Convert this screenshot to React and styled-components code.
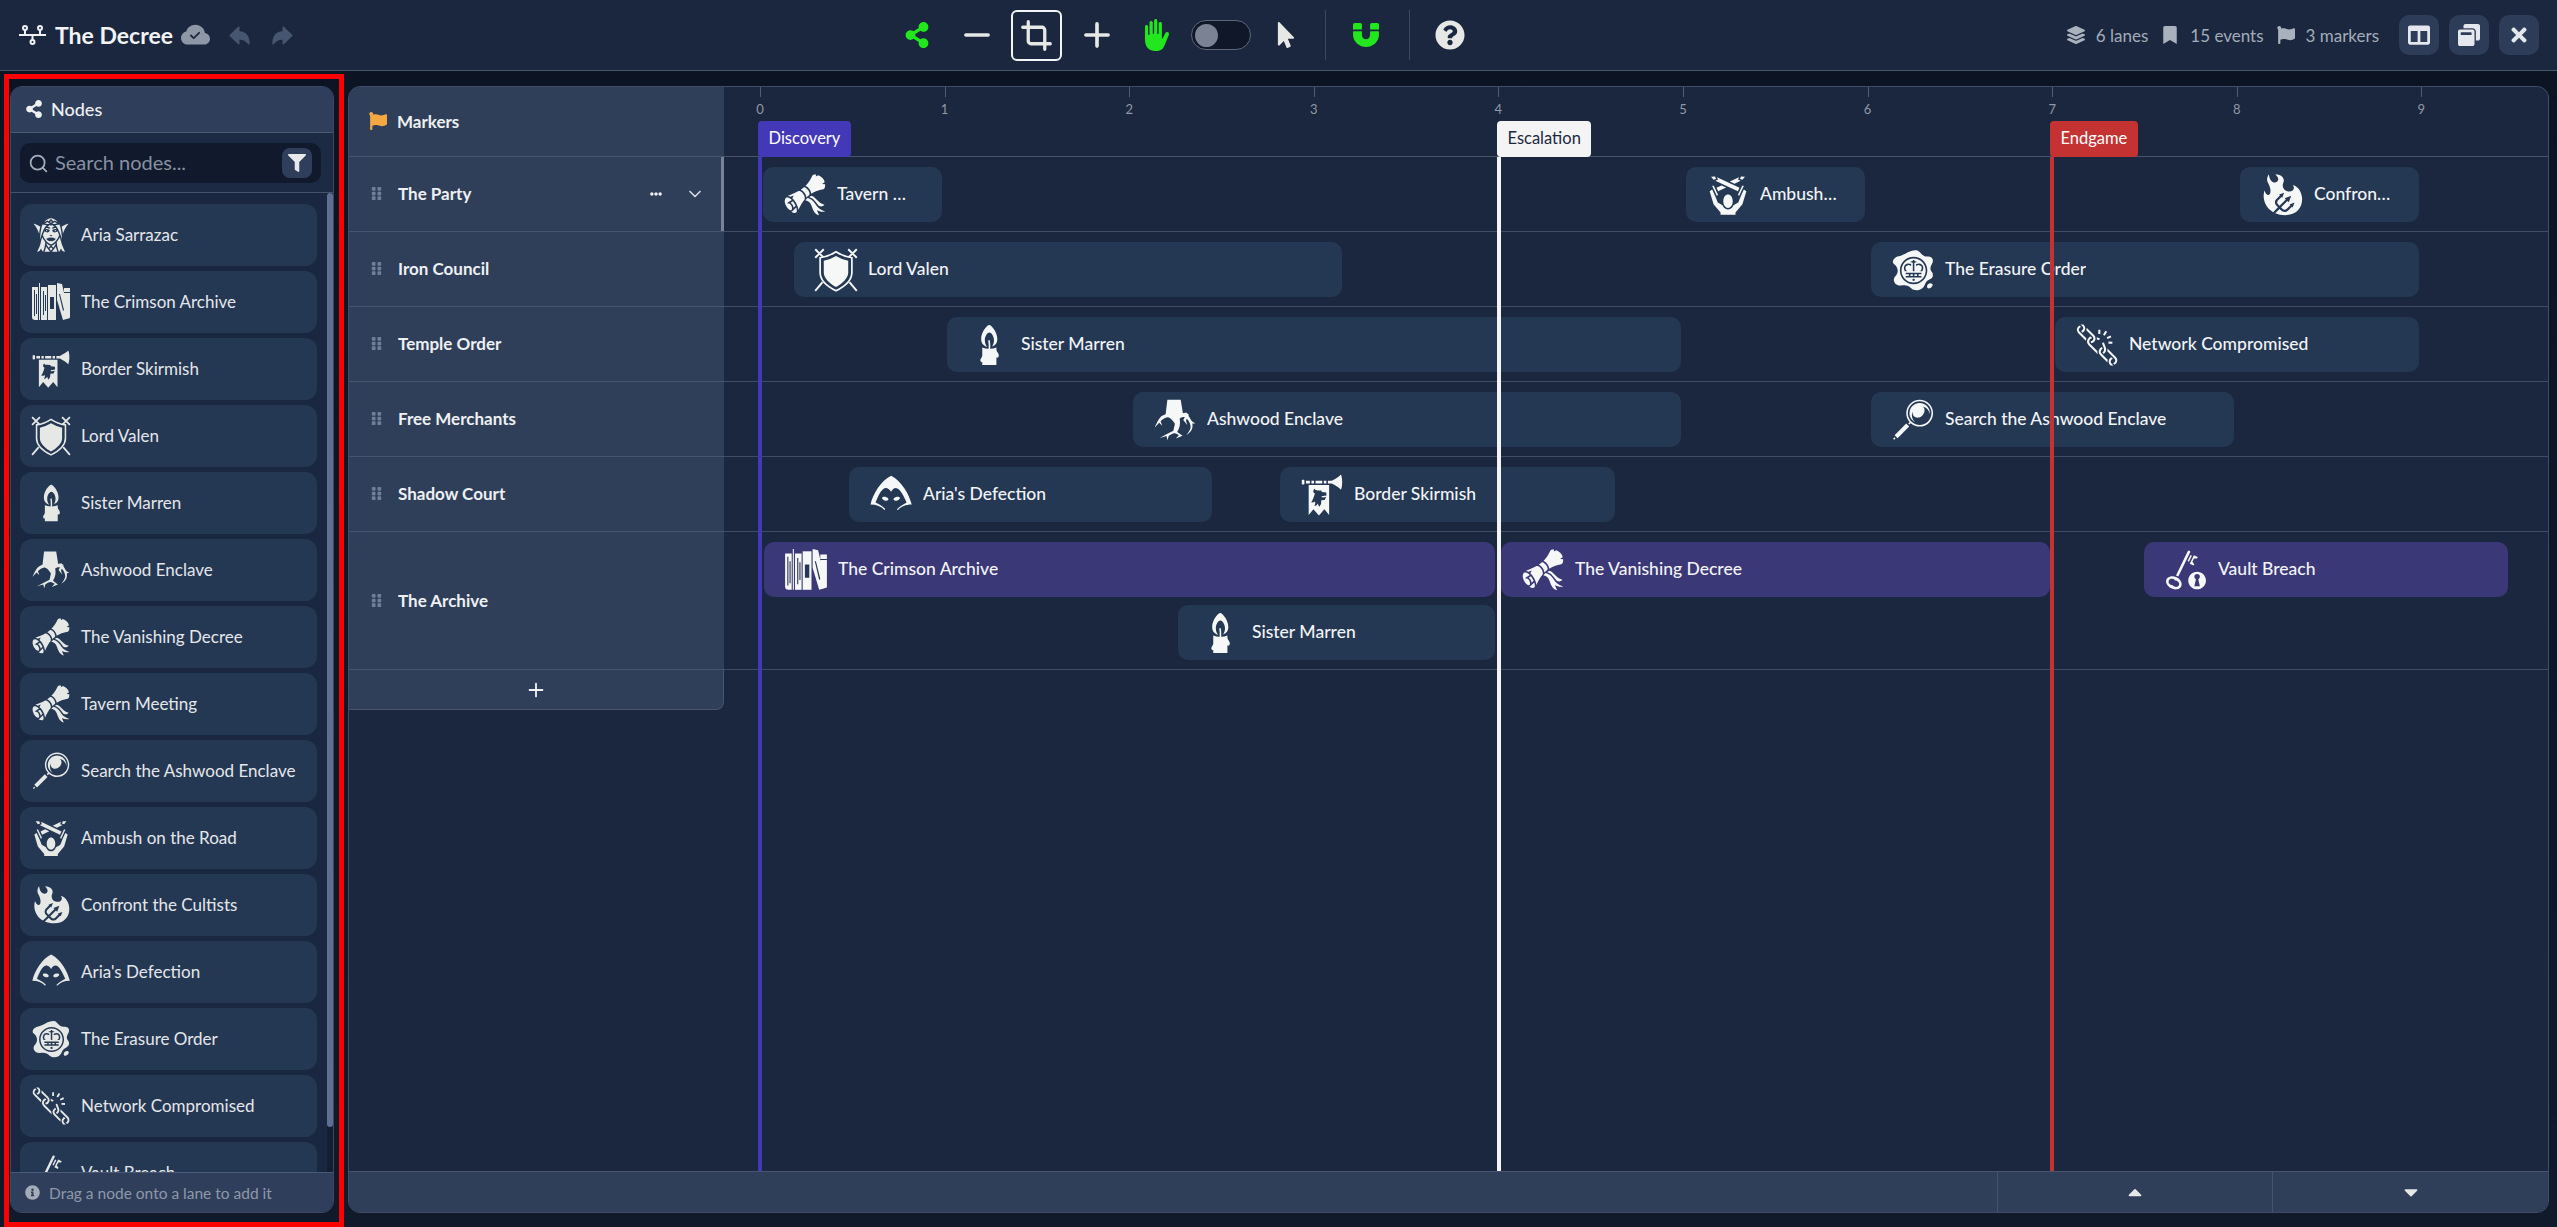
import React from "react";
import styled, { createGlobalStyle } from "styled-components";
import {
  GiWomanElfFace, GiTrumpetFlag, GiCandleLight, GiTreeRoots, GiTiedScroll, GiMagnifyingGlass,
  GiSwordsPower, GiFlamingTrident, GiHood, GiWaxSeal, GiBreakingChain, GiKeyLock,
} from "react-icons/gi";
import {
  FaShareAlt, FaMousePointer, FaMagnet, FaLayerGroup, FaBookmark, FaFlag, FaWindowRestore,
  FaTimes, FaGripVertical, FaEllipsisH, FaInfoCircle, FaFilter, FaCaretUp, FaCaretDown,
  FaQuestionCircle, FaColumns,
} from "react-icons/fa";
import { IoArrowUndo, IoArrowRedo, IoHandLeft } from "react-icons/io5";
import { BsCloudCheckFill } from "react-icons/bs";
import { LuSearch, LuChevronDown, LuPlus, LuMinus, LuCrop } from "react-icons/lu";

const GlobalStyle = createGlobalStyle`
  html, body { margin: 0; padding: 0; height: 100%; background: #0d1524; }
  body { font-family: "Lato", "Liberation Sans", sans-serif; overflow: hidden; }
  * { box-sizing: border-box; }
`;

const Page = styled.div`
  position: relative;
  display: flex;
  flex-direction: column;
  height: 1227px;
  background: linear-gradient(#0c1423, #101a2b);
`;

const Header = styled.header`
  display: flex;
  align-items: center;
  flex-shrink: 0;
  height: 71px;
  padding: 0 18px 0 19px;
  background: #1b273e;
  border-bottom: 1px solid #4a566c;
`;

const Brand = styled.div`
  display: flex;
  align-items: center;
  width: 872px;
  color: #eef0f2;
`;

const Title = styled.h1`
  margin: 0 8px 0 9px;
  font-size: 23px;
  font-weight: 700;
  color: #f1f3f5;
`;

const HistoryIcon = styled.span`
  display: flex;
  margin-left: ${(p) => p.$gap}px;
  font-size: 25px;
  color: #465671;
`;

const Toolbar = styled.div`
  display: flex;
  align-items: center;
  gap: 9px;
`;

const ToolButton = styled.button`
  display: flex;
  align-items: center;
  justify-content: center;
  width: 51px;
  height: 51px;
  padding: 0;
  background: none;
  border: 2px solid ${(p) => (p.$framed ? "#f2f4f5" : "transparent")};
  border-radius: 6px;
  font-size: ${(p) => p.$size || 26}px;
  color: ${(p) => (p.$green ? "#22e61e" : "#e6e8e6")};
`;

const Toggle = styled.div`
  display: flex;
  align-items: center;
  width: 60px;
  height: 30px;
  padding: 0 3px;
  background: #0f1728;
  border: 1px solid #5d6779;
  border-radius: 15px;
`;

const Knob = styled.span`
  width: 23px;
  height: 23px;
  border-radius: 50%;
  background: #7b8293;
`;

const ToolDivider = styled.span`
  width: 1px;
  height: 50px;
  margin: 0 5px 0 ${(p) => p.$before || 5}px;
  background: #3c485e;
`;

const Stats = styled.div`
  display: flex;
  align-items: center;
  margin-left: auto;
  color: #a3acba;
  font-size: 17px;
`;

const Stat = styled.span`
  display: flex;
  align-items: center;
  gap: 11px;
  margin-right: 13px;
  &:last-of-type { margin-right: 20px; }
  svg { font-size: 18px; color: #a9b1bd; }
`;

const WindowButton = styled.button`
  display: flex;
  align-items: center;
  justify-content: center;
  width: 40px;
  height: 40px;
  margin-left: ${(p) => p.$gap || 0}px;
  padding: 0;
  background: #2d3c58;
  border: none;
  border-radius: 10px;
  font-size: 22px;
  color: #e4e8ee;
`;

const Workspace = styled.main`
  display: flex;
  flex: 1;
  min-height: 0;
  gap: 14px;
  padding: 15px 8px 14px 10px;
`;

const NodesPanel = styled.aside`
  display: flex;
  flex-direction: column;
  flex-shrink: 0;
  width: 324px;
  overflow: hidden;
  background: #1a2740;
  border: 1px solid #3a4862;
  border-radius: 12px;
`;

const NodesHead = styled.div`
  display: flex;
  align-items: center;
  gap: 8px;
  flex-shrink: 0;
  height: 46px;
  padding: 0 0 2px 14px;
  background: #2f3f5b;
  border-bottom: 1px solid #4a5a76;
  color: #eef0f2;
  font-size: 18px;
  font-weight: 500;
`;

const SearchRow = styled.div`
  flex-shrink: 0;
  height: 60px;
  padding: 10px 12px 0 9px;
  background: #1c2a43;
  border-bottom: 1px solid #46536c;
`;

const SearchBox = styled.div`
  display: flex;
  align-items: center;
  height: 40px;
  padding: 0 9px 0 8px;
  background: #101a2c;
  border-radius: 10px;
  color: #8791a2;
  font-size: 20px;
  svg.lens { font-size: 21px; margin-right: 6px; color: #a6aeba; }
`;

const SearchHint = styled.span`
  padding-bottom: 2px;
`;

const FilterButton = styled.span`
  display: flex;
  align-items: center;
  justify-content: center;
  width: 30px;
  height: 30px;
  margin-left: auto;
  background: #2f3f5b;
  border-radius: 8px;
  font-size: 18px;
  color: #e6e8ea;
`;

const ListArea = styled.div`
  position: relative;
  flex: 1;
  min-height: 0;
`;

const NodeList = styled.div`
  display: flex;
  flex-direction: column;
  height: 100%;
  gap: 5px;
  padding: 11px 16px 17px 9px;
  overflow: hidden;
`;

// the page's own scrollbar, drawn because the browser hides native ones when photographed
const ScrollTrack = styled.div`
  position: absolute;
  top: 0;
  right: 0;
  bottom: 0;
  width: 6px;
  background: #141e31;
`;

const ScrollThumb = styled.div`
  height: 934px;
  background: #5f6f92;
  border-radius: 3px;
`;

const NodeCard = styled.div`
  display: flex;
  align-items: center;
  flex-shrink: 0;
  height: 62px;
  padding-left: 11px;
  background: #243854;
  border-radius: 12px;
  color: #e4e7ea;
  font-size: 17px;
  svg { flex-shrink: 0; font-size: 40px; margin-right: 10px; color: #e6e8e6; }
`;

const NodeName = styled.span`
  padding-bottom: 2px;
`;

const NodesFoot = styled.div`
  display: flex;
  align-items: center;
  gap: 9px;
  flex-shrink: 0;
  height: 40px;
  padding-left: 14px;
  background: #2f3f5b;
  border-top: 1px solid #4a5a76;
  color: #8e98a8;
  font-size: 15.5px;
  svg { font-size: 15px; color: #a4acb8; }
`;

const BoardPanel = styled.section`
  display: flex;
  flex-direction: column;
  flex: 1;
  min-width: 0;
  overflow: hidden;
  background: #1b273e;
  border: 1px solid #3f4d68;
  border-radius: 12px;
`;

const BoardBody = styled.div`
  display: flex;
  flex: 1;
  min-height: 0;
`;

const LaneColumn = styled.div`
  flex-shrink: 0;
  width: 375px;
`;

const LaneHead = styled.div`
  position: relative;
  display: flex;
  align-items: center;
  height: ${(p) => p.$height}px;
  padding: 0 0 1px 20px;
  background: #2f3f5a;
  border-bottom: 1px solid #46546e;
  color: #eef0f2;
  font-size: 17px;
  font-weight: 700;
`;

const MarkerIcon = styled(FaFlag)`
  margin-right: 10px;
  font-size: 18px;
  color: #f5a742;
`;

const Grip = styled(FaGripVertical)`
  margin-right: 14px;
  font-size: 15px;
  color: #6f7f99;
`;

const LaneActions = styled.span`
  display: flex;
  align-items: center;
  gap: 23px;
  margin-left: auto;
  padding-right: 19px;
  font-size: 12px;
  svg.chevron { font-size: 20px; color: #d5d9df; }
`;

const ActiveEdge = styled.span`
  position: absolute;
  top: 0;
  right: 0;
  bottom: 0;
  width: 3px;
  background: #76839a;
`;

const AddLane = styled.div`
  display: flex;
  align-items: center;
  justify-content: center;
  height: 40px;
  background: #2f3f5a;
  border-bottom: 1px solid #46546e;
  border-right: 1px solid #46546e;
  border-bottom-right-radius: 8px;
  font-size: 22px;
  color: #f0f2f4;
`;

const Timeline = styled.div`
  position: relative;
  flex: 1;
  min-width: 0;
`;

const Ruler = styled.div`
  position: relative;
  height: 70px;
  border-bottom: 1px solid #46546e;
`;

const Tick = styled.span`
  position: absolute;
  top: 0;
  left: ${(p) => p.$left}px;
  width: 1px;
  height: 10px;
  background: #4f5c75;
`;

const TickLabel = styled.span`
  position: absolute;
  top: 14px;
  left: ${(p) => p.$left - 10}px;
  width: 20px;
  text-align: center;
  color: #8f98a8;
  font-size: 13px;
`;

const Track = styled.div`
  position: relative;
  height: ${(p) => p.$height}px;
  border-bottom: 1px solid #3f4c66;
`;

const EventBlock = styled.div`
  position: absolute;
  top: ${(p) => p.$top}px;
  left: ${(p) => p.$left}px;
  display: flex;
  align-items: center;
  width: ${(p) => p.$width}px;
  height: 55px;
  padding: 0 25px 0 20px;
  background: ${(p) => (p.$purple ? "#3b3878" : "#243854")};
  border-radius: 10px;
  color: #f2f4f6;
  font-size: 17.5px;
  font-weight: 500;
  svg { flex-shrink: 0; font-size: 44px; margin-right: 10px; color: #f6f7f7; }
`;

const EventName = styled.span`
  padding-bottom: 2px;
  overflow: hidden;
  white-space: nowrap;
  text-overflow: ellipsis;
`;

const MarkerLine = styled.span`
  position: absolute;
  top: 70px;
  bottom: 0;
  left: ${(p) => p.$left}px;
  width: 4px;
  background: ${(p) => p.$color};
  z-index: 2;
`;

const MarkerFlag = styled.span`
  position: absolute;
  top: 34px;
  left: ${(p) => p.$left}px;
  display: flex;
  align-items: center;
  height: 36px;
  padding: 0 10.5px 2px;
  background: ${(p) => p.$color};
  border-radius: 4px;
  color: ${(p) => p.$text};
  font-size: 16.5px;
  z-index: 2;
`;

const BoardFoot = styled.div`
  display: flex;
  flex-shrink: 0;
  height: 41px;
  background: #2f3f5a;
  border-top: 1px solid #46546e;
`;

const FootSpacer = styled.div`
  flex: 1;
`;

const FootButton = styled.div`
  display: flex;
  align-items: center;
  justify-content: center;
  width: ${(p) => p.$width}px;
  border-left: 1px solid #46546e;
  font-size: 22px;
  color: #e6e8e6;
`;

const Annotation = styled.div`
  position: absolute;
  top: 74px;
  left: 4px;
  width: 340px;
  height: 1153px;
  border: 5px solid #ff0000;
  pointer-events: none;
  z-index: 5;
`;

// the little branching glyph next to the project title
const BranchIcon = () => (
  <svg width="27" height="20" viewBox="0 0 27 20" fill="none" stroke="currentColor" strokeWidth="2">
    <circle cx="6" cy="3" r="2" />
    <circle cx="21" cy="3" r="2" />
    <circle cx="13.5" cy="17" r="2" />
    <path d="M0 10h27M6 5v5M21 5v5M13.5 10v5" />
  </svg>
);

// closer to the reference than the packaged bookshelf: books stand tight together
const ArchiveIcon = () => (
  <svg width="1em" height="1em" viewBox="0 0 40 40" fill="currentColor">
    <path d="M1 5h6v33H4c-2 0-3-1-3-3z" />
    <path d="M8 1h1v37H8z" />
    <path d="M10 5h6v33h-6z" />
    <path d="M17 3h8v35h-8z" />
    <path d="M26 1l5 1 8 34-7 2-6-20z" />
    <path d="M33 6h6v29l-4 2-2-8z" />
    <g fill="#243854">
      <path d="M3 8h1v26H3zM5 12h1v20H5zM12 9h1v24h-1zM14 13h1v16h-1zM19 15h4v12h-4z" />
      <path d="M28 12l1 0 4 16-1 1zM33 10h6v1h-6z" />
    </g>
  </svg>
);

const CrestIcon = () => (
  <svg width="1em" height="1em" viewBox="0 0 36 36" fill="currentColor">
    <path d="M1 1l7 7M8 1L1 8M35 1l-7 7M28 1l7 7M1 35l6-7M35 35l-6-7" stroke="currentColor" strokeWidth="1.6" />
    <path d="M18 3Q12 7 5 8V20C5 27 12 32 18 35 24 32 31 27 31 20V8Q24 7 18 3Z" fill="#243854" stroke="currentColor" strokeWidth="1.4" />
    <path d="M18 6.5Q13 9.500 8 10.500V20C8 25 13 29 18 32 23 29 28 25 28 20V10.500Q23 9.500 18 6.500Z" />
  </svg>
);

const nodes = [
  [GiWomanElfFace, "Aria Sarrazac"],
  [ArchiveIcon, "The Crimson Archive"],
  [GiTrumpetFlag, "Border Skirmish"],
  [CrestIcon, "Lord Valen"],
  [GiCandleLight, "Sister Marren"],
  [GiTreeRoots, "Ashwood Enclave"],
  [GiTiedScroll, "The Vanishing Decree"],
  [GiTiedScroll, "Tavern Meeting"],
  [GiMagnifyingGlass, "Search the Ashwood Enclave"],
  [GiSwordsPower, "Ambush on the Road"],
  [GiFlamingTrident, "Confront the Cultists"],
  [GiHood, "Aria's Defection"],
  [GiWaxSeal, "The Erasure Order"],
  [GiBreakingChain, "Network Compromised"],
  [GiKeyLock, "Vault Breach"],
];

// left / width are pixels along the timeline, top is inside the lane
const lanes = [
  {
    name: "The Party", height: 75, active: true,
    events: [
      { icon: GiTiedScroll, name: "Tavern Meeting", left: 39, width: 179, top: 10 },
      { icon: GiSwordsPower, name: "Ambush on the Road", left: 962, width: 179, top: 10 },
      { icon: GiFlamingTrident, name: "Confront the Cultists", left: 1516, width: 179, top: 10 },
    ],
  },
  {
    name: "Iron Council", height: 75,
    events: [
      { icon: CrestIcon, name: "Lord Valen", left: 70, width: 548, top: 10 },
      { icon: GiWaxSeal, name: "The Erasure Order", left: 1147, width: 548, top: 10 },
    ],
  },
  {
    name: "Temple Order", height: 75,
    events: [
      { icon: GiCandleLight, name: "Sister Marren", left: 223, width: 734, top: 10 },
      { icon: GiBreakingChain, name: "Network Compromised", left: 1331, width: 364, top: 10 },
    ],
  },
  {
    name: "Free Merchants", height: 75,
    events: [
      { icon: GiTreeRoots, name: "Ashwood Enclave", left: 409, width: 548, top: 10 },
      { icon: GiMagnifyingGlass, name: "Search the Ashwood Enclave", left: 1147, width: 363, top: 10 },
    ],
  },
  {
    name: "Shadow Court", height: 75,
    events: [
      { icon: GiHood, name: "Aria's Defection", left: 125, width: 363, top: 10 },
      { icon: GiTrumpetFlag, name: "Border Skirmish", left: 556, width: 335, top: 10 },
    ],
  },
  {
    name: "The Archive", height: 138,
    events: [
      { icon: ArchiveIcon, name: "The Crimson Archive", left: 40, width: 731, top: 10, purple: true },
      { icon: GiTiedScroll, name: "The Vanishing Decree", left: 777, width: 549, top: 10, purple: true },
      { icon: GiKeyLock, name: "Vault Breach", left: 1420, width: 364, top: 10, purple: true },
      { icon: GiCandleLight, name: "Sister Marren", left: 454, width: 317, top: 73 },
    ],
  },
];

const markers = [
  { name: "Discovery", left: 34, color: "#4338b8", text: "#fff" },
  { name: "Escalation", left: 773, color: "#f4f4f4", text: "#1c2840" },
  { name: "Endgame", left: 1326, color: "#c53232", text: "#fff" },
];

const ticks = [0, 1, 2, 3, 4, 5, 6, 7, 8, 9];

export default function App() {
  return (
    <Page>
      <GlobalStyle />
      <Header>
        <Brand>
          <BranchIcon />
          <Title>The Decree</Title>
          <BsCloudCheckFill size={29} color="#8d97a6" />
          <HistoryIcon $gap={17}><IoArrowUndo /></HistoryIcon>
          <HistoryIcon $gap={18}><IoArrowRedo /></HistoryIcon>
        </Brand>
        <Toolbar>
          <ToolButton $green><FaShareAlt /></ToolButton>
          <ToolButton $size={38}><LuMinus strokeWidth={2.3} /></ToolButton>
          <ToolButton $framed $size={33}><LuCrop strokeWidth={2.4} /></ToolButton>
          <ToolButton $size={38}><LuPlus strokeWidth={2.3} /></ToolButton>
          <ToolButton $green $size={32}><IoHandLeft /></ToolButton>
          <Toggle><Knob /></Toggle>
          <ToolButton><FaMousePointer /></ToolButton>
          <ToolDivider />
          <ToolButton $green><FaMagnet /></ToolButton>
          <ToolDivider $before={9} />
          <ToolButton $size={30}><FaQuestionCircle /></ToolButton>
        </Toolbar>
        <Stats>
          <Stat><FaLayerGroup />6 lanes</Stat>
          <Stat><FaBookmark />15 events</Stat>
          <Stat><FaFlag />3 markers</Stat>
          <WindowButton><FaColumns /></WindowButton>
          <WindowButton $gap={10}><FaWindowRestore /></WindowButton>
          <WindowButton $gap={10}><FaTimes /></WindowButton>
        </Stats>
      </Header>
      <Workspace>
        <NodesPanel>
          <NodesHead><FaShareAlt />Nodes</NodesHead>
          <SearchRow>
            <SearchBox>
              <LuSearch className="lens" />
              <SearchHint>Search nodes...</SearchHint>
              <FilterButton><FaFilter /></FilterButton>
            </SearchBox>
          </SearchRow>
          <ListArea>
            <NodeList>
              {nodes.map(([Icon, name]) => (
                <NodeCard key={name}><Icon /><NodeName>{name}</NodeName></NodeCard>
              ))}
            </NodeList>
            <ScrollTrack><ScrollThumb /></ScrollTrack>
          </ListArea>
          <NodesFoot><FaInfoCircle />Drag a node onto a lane to add it</NodesFoot>
        </NodesPanel>
        <BoardPanel>
          <BoardBody>
            <LaneColumn>
              <LaneHead $height={70}><MarkerIcon />Markers</LaneHead>
              {lanes.map((lane) => (
                <LaneHead key={lane.name} $height={lane.height}>
                  <Grip />
                  {lane.name}
                  {lane.active && (
                    <>
                      <LaneActions><FaEllipsisH /><LuChevronDown className="chevron" /></LaneActions>
                      <ActiveEdge />
                    </>
                  )}
                </LaneHead>
              ))}
              <AddLane><LuPlus /></AddLane>
            </LaneColumn>
            <Timeline>
              <Ruler>
                {ticks.map((t) => (
                  <React.Fragment key={t}>
                    <Tick $left={36 + t * 184.6} />
                    <TickLabel $left={36 + t * 184.6}>{t}</TickLabel>
                  </React.Fragment>
                ))}
              </Ruler>
              {lanes.map((lane) => (
                <Track key={lane.name} $height={lane.height}>
                  {lane.events.map((ev) => {
                    const Icon = ev.icon;
                    return (
                      <EventBlock key={ev.name + ev.left} $left={ev.left} $width={ev.width} $top={ev.top} $purple={ev.purple}>
                        <Icon />
                        <EventName>{ev.name}</EventName>
                      </EventBlock>
                    );
                  })}
                </Track>
              ))}
              {markers.map((m) => (
                <React.Fragment key={m.name}>
                  <MarkerFlag $left={m.left} $color={m.color} $text={m.text}>{m.name}</MarkerFlag>
                  <MarkerLine $left={m.left} $color={m.color} />
                </React.Fragment>
              ))}
            </Timeline>
          </BoardBody>
          <BoardFoot>
            <FootSpacer />
            <FootButton $width={275}><FaCaretUp /></FootButton>
            <FootButton $width={276}><FaCaretDown /></FootButton>
          </BoardFoot>
        </BoardPanel>
      </Workspace>
      <Annotation />
    </Page>
  );
}
